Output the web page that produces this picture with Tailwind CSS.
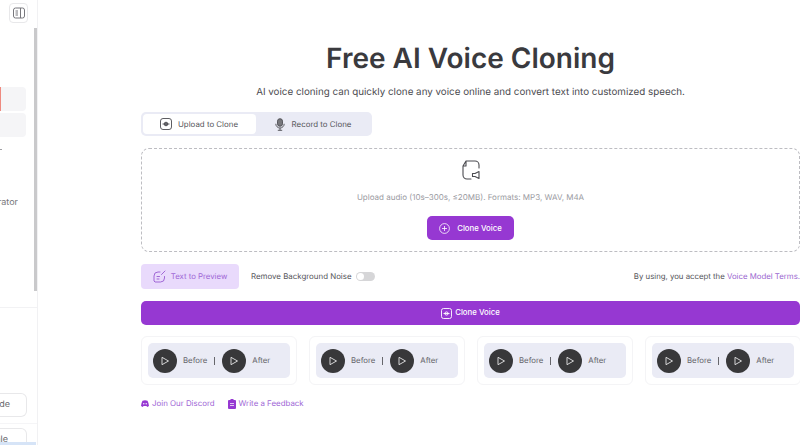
<!DOCTYPE html>
<html><head><meta charset="utf-8"><script src="https://cdn.jsdelivr.net/npm/@tailwindcss/browser@4"></script></head>
<body class="bg-white overflow-hidden">
<div class="flex w-[800px] h-[445px] overflow-hidden bg-white font-['Inter',sans-serif] [font-optical-sizing:none] [text-rendering:geometricPrecision] text-[#4b4b50]">
  <aside class="relative w-[38px] h-full shrink-0 border-r border-[#f1f1f3] flex flex-col items-end overflow-hidden [&>*]:shrink-0">
    <div class="absolute right-0 top-[28px] w-[3px] h-[263px] bg-[#c9c9cb]"></div>
    <div class="mt-[3px] mr-[9px] w-[19px] h-[20px] rounded-[4px] border border-[#e8e8ea] flex items-center justify-center">
      <svg width="12" height="12" viewBox="0 0 12 12" fill="none" stroke="#77777c" stroke-width="1"><rect x=".5" y="1" width="11" height="10" rx="2"/><path d="M7.500 1v10M2.500 4h2.500M2.500 6h2.500M2.500 8h2.500"/></svg>
    </div>
    <div class="mt-[64px] mr-[11px] w-[26px] h-[24px] rounded-r-[4px] bg-[#f5f5f7] border-l-[1px] border-[#ee8a80]"></div>
    <div class="mt-[2px] mr-[11px] w-[26px] h-[24px] rounded-r-[4px] bg-[#f5f5f7]"></div>
    <div class="mt-[12px] self-start w-[2px] h-px bg-[#a0a0a4]"></div>
    <div class="mt-[47px] mr-[19px] text-[9px] leading-[12px] text-[#77777c] w-[19px] overflow-hidden flex justify-end whitespace-nowrap">erator</div>
    <div class="mt-[98px] w-full h-px bg-[#f2f2f4]"></div>
    <div class="mt-[85px] mr-[10px] w-[27px] h-[24px] rounded-r-[6px] border border-l-0 border-[#e8e8ea] flex items-center justify-end pr-[16px] text-[9px] text-[#66666b]">ade</div>
    <div class="mt-[6px] w-full h-px bg-[#f5f5f7]"></div>
    <div class="mt-[4px] mr-[10px] w-[27px] h-[24px] rounded-r-[6px] border border-l-0 border-[#e8e8ea] flex items-center justify-end pr-[18px] text-[9px] text-[#66666b]">nle</div>
    <div class="absolute left-0 bottom-0 w-[36px] h-[3px] bg-[#d6e4f7]"></div>
  </aside>
  <main class="flex-1 min-w-0 pl-[103px] flex flex-col">
    <h1 class="mt-[40px] text-center text-[28px] leading-[36px] font-semibold text-[#3a3a3e]">Free AI Voice Cloning</h1>
    <p class="mt-[10px] text-center text-[9.8px] leading-[14px] text-[#4b4b50]">AI voice cloning can quickly clone any voice online and convert text into customized speech.</p>
    <div class="mt-[12px] w-[231px] h-[24px] rounded-[5px] bg-[#eaebf5] p-[2px] flex text-[7.9px] text-[#55555a]">
      <div class="w-[113px] rounded-[4px] bg-white flex items-center justify-center gap-[6px] pr-[1px]">
        <svg width="12" height="12" viewBox="0 0 12 12" fill="none" stroke="#4b4b50" stroke-width=".9"><rect x=".5" y=".5" width="11" height="11" rx="2.500"/><circle cx="6" cy="6" r="1.800" fill="#77777c"/><path d="M2.500 6h7"/></svg>
        <span class="pt-px">Upload to Clone</span>
      </div>
      <div class="flex-1 flex items-center justify-center gap-[7px]">
        <svg width="10" height="13" viewBox="0 0 10 13" fill="none" stroke="#4b4b50" stroke-width=".9"><rect x="2.500" y=".7" width="5" height="7.600" rx="2.500" fill="#77777c"/><path d="M.8 5.800a4.200 4.200 0 0 0 8.400 0M5 10v2.300M2.800 12.300h4.400"/></svg>
        <span class="pt-px">Record to Clone</span>
      </div>
    </div>
    <div class="mt-[12px] h-[104px] rounded-[8px] border border-dashed border-[#bdbdc2] flex flex-col items-center">
      <svg class="mt-[11px]" width="18" height="20" viewBox="0 0 18 20" fill="none" stroke="#4b4b50" stroke-width="1.100" stroke-linecap="round" stroke-linejoin="round"><path d="M4 1H13A4 4 0 0 1 17 5V8M9 19H5A4 4 0 0 1 1 15V6L4 1M4 1.500V6H1.500"/><path d="M17 11.500V18.500L13 16.500H10.500V13.500H13Z"/></svg>
      <p class="mt-[11px] text-[8px] leading-[12px] text-[#9a9a9f]">Upload audio (10s–300s, ≤20MB). Formats: MP3, WAV, M4A</p>
      <button class="mt-[13px] w-[87px] h-[24px] rounded-[5px] bg-[#9638d2] text-white text-[7.8px] font-medium flex items-center justify-center gap-[7px]">
        <svg width="11" height="11" viewBox="0 0 11 11" fill="none" stroke="#fff" stroke-width=".8"><circle cx="5.500" cy="5.500" r="4.900"/><path d="M5.500 3v5M3 5.500h5"/></svg>
        <span class="pt-px">Clone Voice</span>
      </button>
    </div>
    <div class="mt-[12px] h-[25px] flex items-center">
      <div class="w-[98px] h-[25px] rounded-[4px] bg-[#e9dafc] text-[#a067d6] text-[7.8px] flex items-center justify-center gap-[5px]">
        <svg width="13" height="13" viewBox="0 0 13 13" fill="none" stroke="#a067d6" stroke-width="1" stroke-linecap="round"><path d="M7 2H5A4 4 0 0 0 1 6V11L2 12H7.500A4 4 0 0 0 11.500 8V6.500M4 6.500H6.500M4 9H6M8.500 4.500L12 1"/></svg>
        <span class="pt-px">Text to Preview</span>
      </div>
      <span class="ml-[12px] pt-px text-[7.9px] text-[#55555a]">Remove Background Noise</span>
      <span class="ml-[4px] relative w-[19px] h-[9px] rounded-full bg-[#d6d6d8]"><span class="absolute left-[1px] top-[1px] w-[7px] h-[7px] rounded-full bg-white"></span></span>
      <span class="ml-auto pt-px text-[7.8px] text-[#55555a] whitespace-nowrap">By using, you accept the <span class="text-[#9a66cf]">Voice Model Terms.</span></span>
    </div>
    <button class="mt-[12px] h-[24px] rounded-[5px] bg-[#9638d2] text-white text-[7.8px] font-medium flex items-center justify-center gap-[3px]">
      <svg width="11" height="11" viewBox="0 0 11 11" fill="none" stroke="#fff" stroke-width=".9"><rect x=".5" y=".5" width="10" height="10" rx="2"/><circle cx="5.500" cy="5.500" r="1.600"/><path d="M2.500 5.500h6"/></svg>
      <span>Clone Voice</span>
    </button>
    <div class="mt-[11px] grid grid-cols-4 gap-[12px] w-[660px]">
      <div class="h-[49px] rounded-[6px] border border-[#f4f4f6] p-[6px] flex"><div class="flex-1 rounded-[5px] bg-[#eaebf5] flex items-center pl-[5px] text-[7.8px] text-[#66666b]">
        <span class="w-[24px] h-[24px] rounded-full bg-[#38383a] flex items-center justify-center"><svg width="10" height="10" viewBox="0 0 10 10" fill="none" stroke="#e5e5e7" stroke-width=".9" stroke-linejoin="round"><path d="M2 1.300L8.500 5L2 8.700Z"/></svg></span>
        <span class="ml-[6px]">Before</span><span class="ml-[7px] w-px h-[8px] bg-[#66666b]"></span>
        <span class="ml-[7px] w-[24px] h-[24px] rounded-full bg-[#38383a] flex items-center justify-center"><svg width="10" height="10" viewBox="0 0 10 10" fill="none" stroke="#e5e5e7" stroke-width=".9" stroke-linejoin="round"><path d="M2 1.300L8.500 5L2 8.700Z"/></svg></span>
        <span class="ml-[6px]">After</span></div></div>
      <div class="h-[49px] rounded-[6px] border border-[#f4f4f6] p-[6px] flex"><div class="flex-1 rounded-[5px] bg-[#eaebf5] flex items-center pl-[5px] text-[7.8px] text-[#66666b]">
        <span class="w-[24px] h-[24px] rounded-full bg-[#38383a] flex items-center justify-center"><svg width="10" height="10" viewBox="0 0 10 10" fill="none" stroke="#e5e5e7" stroke-width=".9" stroke-linejoin="round"><path d="M2 1.300L8.500 5L2 8.700Z"/></svg></span>
        <span class="ml-[6px]">Before</span><span class="ml-[7px] w-px h-[8px] bg-[#66666b]"></span>
        <span class="ml-[7px] w-[24px] h-[24px] rounded-full bg-[#38383a] flex items-center justify-center"><svg width="10" height="10" viewBox="0 0 10 10" fill="none" stroke="#e5e5e7" stroke-width=".9" stroke-linejoin="round"><path d="M2 1.300L8.500 5L2 8.700Z"/></svg></span>
        <span class="ml-[6px]">After</span></div></div>
      <div class="h-[49px] rounded-[6px] border border-[#f4f4f6] p-[6px] flex"><div class="flex-1 rounded-[5px] bg-[#eaebf5] flex items-center pl-[5px] text-[7.8px] text-[#66666b]">
        <span class="w-[24px] h-[24px] rounded-full bg-[#38383a] flex items-center justify-center"><svg width="10" height="10" viewBox="0 0 10 10" fill="none" stroke="#e5e5e7" stroke-width=".9" stroke-linejoin="round"><path d="M2 1.300L8.500 5L2 8.700Z"/></svg></span>
        <span class="ml-[6px]">Before</span><span class="ml-[7px] w-px h-[8px] bg-[#66666b]"></span>
        <span class="ml-[7px] w-[24px] h-[24px] rounded-full bg-[#38383a] flex items-center justify-center"><svg width="10" height="10" viewBox="0 0 10 10" fill="none" stroke="#e5e5e7" stroke-width=".9" stroke-linejoin="round"><path d="M2 1.300L8.500 5L2 8.700Z"/></svg></span>
        <span class="ml-[6px]">After</span></div></div>
      <div class="h-[49px] rounded-[6px] border border-[#f4f4f6] p-[6px] flex"><div class="flex-1 rounded-[5px] bg-[#eaebf5] flex items-center pl-[5px] text-[7.8px] text-[#66666b]">
        <span class="w-[24px] h-[24px] rounded-full bg-[#38383a] flex items-center justify-center"><svg width="10" height="10" viewBox="0 0 10 10" fill="none" stroke="#e5e5e7" stroke-width=".9" stroke-linejoin="round"><path d="M2 1.300L8.500 5L2 8.700Z"/></svg></span>
        <span class="ml-[6px]">Before</span><span class="ml-[7px] w-px h-[8px] bg-[#66666b]"></span>
        <span class="ml-[7px] w-[24px] h-[24px] rounded-full bg-[#38383a] flex items-center justify-center"><svg width="10" height="10" viewBox="0 0 10 10" fill="none" stroke="#e5e5e7" stroke-width=".9" stroke-linejoin="round"><path d="M2 1.300L8.500 5L2 8.700Z"/></svg></span>
        <span class="ml-[6px]">After</span></div></div>
    </div>
    <div class="mt-[13px] flex items-center text-[7.9px] text-[#a067d6]">
      <svg width="8" height="7" viewBox="0 0 8 7" fill="#9638d2"><path d="M1.500.7Q4 0 6.500.7Q7.800 3 8 6L6.200 7L5.500 6H2.500L1.800 7L0 6Q.2 3 1.500.7Z"/><circle cx="2.800" cy="3.700" r=".7" fill="#fff"/><circle cx="5.200" cy="3.700" r=".7" fill="#fff"/></svg>
      <span class="ml-[3px]">Join Our Discord</span>
      <svg class="ml-[13px]" width="8" height="10" viewBox="0 0 8 10" fill="#9638d2"><path d="M1 1H2.500V0H5.500V1H7Q8 1 8 2V9Q8 10 7 10H1Q0 10 0 9V2Q0 1 1 1Z"/><path d="M2 4.500H6M2 6.500H6" stroke="#fff" stroke-width=".7"/></svg>
      <span class="ml-[3px]">Write a Feedback</span>
    </div>
  </main>
</div>
</body></html>
